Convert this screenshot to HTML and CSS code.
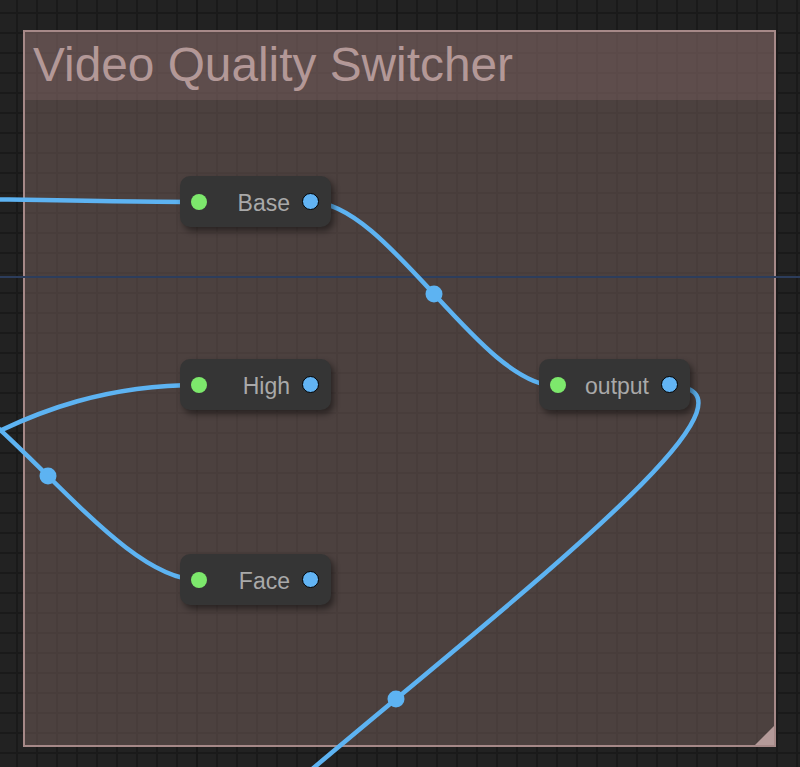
FILE: index.html
```html
<!DOCTYPE html>
<html lang="en">
<head>
  <meta charset="UTF-8">
  <title>Video Quality Switcher</title>
  <link rel="stylesheet" href="styles.css">
</head>
<body>
  <div id="graph">
    <!-- group frame -->
    <div class="group">
      <div class="group-title">Video Quality Switcher</div>
      <div class="group-body"></div>
      <div class="group-resize"></div>
    </div>

    <div class="guide"></div>

    <!-- links -->
    <svg class="links" width="800" height="767" viewBox="0 0 800 767">
      <g fill="none" stroke="#5db3f2" stroke-width="4.5" stroke-linecap="round">
        <path d="M -200 197 C -80 197, 90 202, 199 202" />
        <path d="M 311 202 C 388 202, 480 386, 557 386" />
        <path d="M -103 372 C -11 372, 107 580, 199 580" />
        <path d="M -30 446 C 40 408, 110 385, 199 385" />
        <path d="M 669 386 C 876 386, -84 1012, 123 1012" />
      </g>
      <g fill="#5db3f2">
        <circle cx="434" cy="294" r="8.5" />
        <circle cx="48" cy="476" r="8.5" />
        <circle cx="396" cy="699" r="8.5" />
      </g>
    </svg>

    <!-- reroute nodes -->
    <div class="node" style="left:180px; top:176px;">
      <span class="slot in"></span><span class="node-label">Base</span><span class="slot out"></span>
    </div>
    <div class="node" style="left:180px; top:359px;">
      <span class="slot in"></span><span class="node-label">High</span><span class="slot out"></span>
    </div>
    <div class="node" style="left:180px; top:554px;">
      <span class="slot in"></span><span class="node-label">Face</span><span class="slot out"></span>
    </div>
    <div class="node" style="left:539px; top:359px;">
      <span class="slot in"></span><span class="node-label">output</span><span class="slot out"></span>
    </div>
  </div>
</body>
</html>
```

FILE: styles.css
```css
:root {
  --canvas-bg: #222222;
  --grid-line: #1a1a1a;
  --group-border: #a68988;
  --node-bg: #353535;
  --slot-in: #7de86c;
  --slot-out: #62b4f4;
  --label: #a9a9a9;
}
* {
  box-sizing: border-box;
  margin: 0;
  padding: 0;
}
body {
  background: var(--canvas-bg);
  font-family: 'Liberation Sans', Arial, sans-serif;
  overflow: hidden;
}
#graph {
  position: relative;
  width: 800px;
  height: 767px;
  overflow: hidden;
  background-color: var(--canvas-bg);
  background-image:
    linear-gradient(90deg, transparent 196px, #171717 196px, #171717 198px, transparent 198px),
    linear-gradient(90deg, transparent 396px, #171717 396px, #171717 398px, transparent 398px),
    linear-gradient(90deg, transparent 16px, var(--grid-line) 16px, var(--grid-line) 18px, transparent 18px),
    linear-gradient(0deg, transparent 18px, var(--grid-line) 18px, var(--grid-line) 20px);
  background-size: 800px 767px, 800px 767px, 20px 20px, 20px 20px;
  background-repeat: no-repeat, no-repeat, repeat, repeat;
  background-position: 0 0, 0 0, 0 0, 0 12px;
}
.group {
  position: absolute;
  left: 23px;
  top: 30px;
  width: 753px;
  height: 717px;
  border: 2px solid var(--group-border);
  display: flex;
  flex-direction: column;
}
.group-title {
  height: 68px;
  background: rgba(122, 98, 96, 0.68);
  color: #b39897;
  font-size: 47.8px;
  line-height: 66px;
  padding-left: 8px;
  white-space: nowrap;
}
.group-body {
  flex: 1;
  background: rgba(101, 84, 81, 0.62);
}
.group-resize {
  position: absolute;
  right: 0;
  bottom: 0;
  width: 0;
  height: 0;
  border-left: 19px solid transparent;
  border-bottom: 19px solid #b49a99;
}
.guide {
  position: absolute;
  left: 0;
  top: 276px;
  width: 800px;
  height: 2px;
  background: #2c3d5c;
}
.links {
  position: absolute;
  left: 0;
  top: 0;
}
.node {
  position: absolute;
  width: 151px;
  height: 51px;
  background: var(--node-bg);
  border-radius: 10px;
  box-shadow: 3px 4px 6px rgba(0, 0, 0, 0.45);
  display: flex;
  align-items: center;
  padding: 0 12px 0 11px;
}
.slot {
  width: 16px;
  height: 16px;
  border-radius: 50%;
  flex: none;
}
.slot.in {
  background: var(--slot-in);
}
.slot.out {
  background: var(--slot-out);
  border: 1.5px solid #000;
  width: 17px;
  height: 17px;
}
.node-label {
  flex: 1;
  text-align: right;
  padding: 4px 12px 0 0;
  color: var(--label);
  font-size: 23px;
}
```
